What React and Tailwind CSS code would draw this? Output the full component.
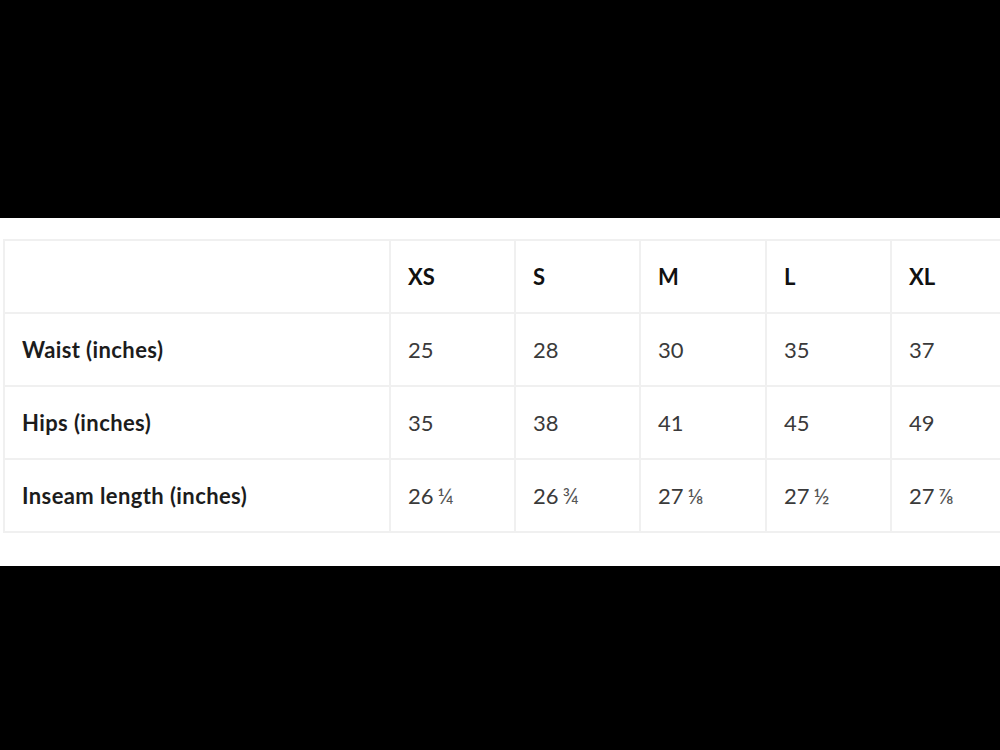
const sizes = ['XS', 'S', 'M', 'L', 'XL'];

const rows = [
  { label: 'Waist (inches)', values: [['25'], ['28'], ['30'], ['35'], ['37']] },
  { label: 'Hips (inches)', values: [['35'], ['38'], ['41'], ['45'], ['49']] },
  {
    label: 'Inseam length (inches)',
    values: [['26', '¼'], ['26', '¾'], ['27', '⅛'], ['27', '½'], ['27', '⅞']],
  },
];

export default function App() {
  return (
    <div className="h-[750px] flex flex-col bg-black overflow-hidden" style={{ fontFamily: 'Lato, "Open Sans", sans-serif' }}>
      <div className="h-[218px] shrink-0" />

      {/* size chart band */}
      <div className="h-[348px] shrink-0 bg-white pt-[21px] pl-[3px] overflow-hidden">
        <table className="table-fixed border-collapse w-[1016px]">
          <colgroup>
            <col className="w-[386px]" />
            <col className="w-[125px]" />
            <col className="w-[125px]" />
            <col className="w-[126px]" />
            <col className="w-[125px]" />
            <col className="w-[129px]" />
          </colgroup>
          <thead>
            <tr className="h-[73px]">
              <th className="border-2 border-[#f0f0f0]" />
              {sizes.map((s) => (
                <th key={s} className="border-2 border-[#f0f0f0] text-left pl-[17px] text-[22px] font-bold text-[#111]">
                  {s}
                </th>
              ))}
            </tr>
          </thead>
          <tbody>
            {rows.map((r) => (
              <tr key={r.label} className="h-[73px]">
                <td className="border-2 border-[#f0f0f0] pl-[17px] text-[22px] font-bold tracking-[0.4px] text-[#1c1c1c]">{r.label}</td>
                {r.values.map(([n, f], i) => (
                  <td key={i} className="border-2 border-[#f0f0f0] pl-[17px] text-[22px] text-[#3a3a3a]">
                    {n}
                    {f && <span className="ml-[4px] text-[22px] text-[#555]">{f}</span>}
                  </td>
                ))}
              </tr>
            ))}
          </tbody>
        </table>
      </div>

      <div className="flex-1" />
    </div>
  );
}
